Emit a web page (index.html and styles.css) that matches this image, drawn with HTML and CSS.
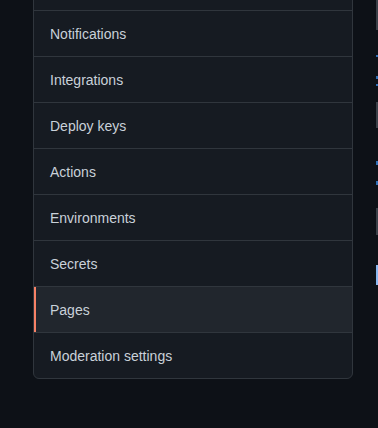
FILE: index.html
```html
<!DOCTYPE html>
<html lang="en">
<head>
<meta charset="utf-8">
<title>Settings</title>
<link rel="stylesheet" href="styles.css">
</head>
<body>
<div class="page">
  <nav class="menu">
    <a class="item" aria-hidden="true"></a>
    <a class="item">Notifications</a>
    <a class="item">Integrations</a>
    <a class="item">Deploy keys</a>
    <a class="item">Actions</a>
    <a class="item">Environments</a>
    <a class="item">Secrets</a>
    <a class="item selected">Pages</a>
    <a class="item">Moderation settings</a>
  </nav>
  <div class="main">
    <span class="frag grey f1"></span>
    <span class="frag blue f2"></span>
    <span class="frag blue f3"></span>
    <span class="frag blue f4"></span>
    <span class="frag grey f5"></span>
    <span class="frag blue f6"></span>
    <span class="frag blue f7"></span>
    <span class="frag grey f8"></span>
    <span class="frag light f9"></span>
  </div>
</div>
</body>
</html>
```

FILE: styles.css
```css
html, body {
  margin: 0;
  padding: 0;
  background: #0d1117;
  overflow: hidden;
}

body {
  width: 378px;
  height: 428px;
  font-family: "Liberation Sans", Arial, sans-serif;
  font-size: 14px;
  color: #c9d1d9;
}

.page {
  display: flex;
  align-items: flex-start;
  padding-left: 33px;
}

.menu {
  width: 320px;
  box-sizing: border-box;
  margin-top: -36px;
  background: #161b22;
  border: 1px solid #30363d;
  border-radius: 6px;
  display: flex;
  flex-direction: column;
  overflow: hidden;
}

.item {
  height: 45px;
  display: flex;
  align-items: center;
  padding-left: 16px;
  border-bottom: 1px solid #30363d;
  color: #c9d1d9;
  text-decoration: none;
}

.item:last-child {
  border-bottom: none;
}

.item.selected {
  background: #21262d;
  box-shadow: inset 2px 0 0 #f78166;
}

.main {
  margin-left: 23px;
  display: flex;
  flex-direction: column;
  align-items: flex-start;
}

.frag {
  display: block;
  width: 2px;
}

.grey { background: #3b4149; }
.blue { background: #2f6fb5; }
.light { background: #8ab8f0; }

.f1 { height: 30px; }
.f2 { height: 2px; margin-top: 25px; }
.f3 { height: 3px; margin-top: 19px; }
.f4 { height: 2px; margin-top: 5px; }
.f5 { height: 26px; margin-top: 16px; }
.f6 { height: 4px; margin-top: 33px; }
.f7 { height: 4px; margin-top: 16px; }
.f8 { height: 27px; margin-top: 23px; }
.f9 { height: 20px; margin-top: 30px; }
```
